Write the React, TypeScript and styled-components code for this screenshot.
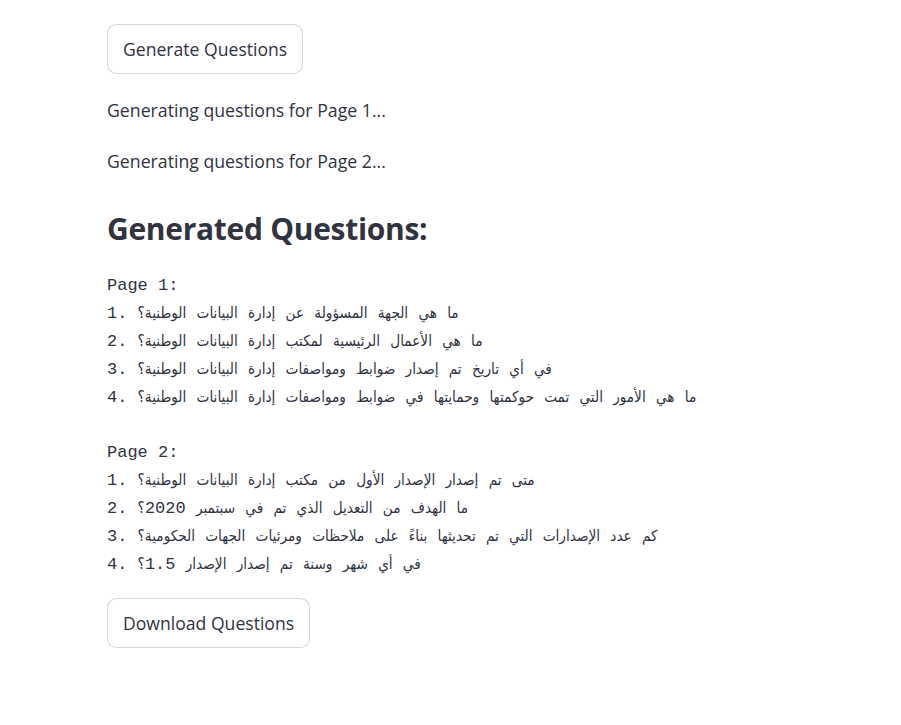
import React from "react";
import styled, { createGlobalStyle } from "styled-components";

const GlobalStyle = createGlobalStyle`
  html, body {
    margin: 0;
    padding: 0;
    background: #ffffff;
  }
  body {
    font-family: "Open Sans", "Liberation Sans", sans-serif;
    color: rgb(49, 51, 63);
  }
`;

const Main = styled.div`
  display: flex;
  flex-direction: column;
  align-items: flex-start;
  gap: 21px;
  padding: 24px 0 40px 107px;
`;

const Button = styled.button`
  height: 50px;
  padding: 0 15px;
  background: #ffffff;
  border: 1px solid rgba(49, 51, 63, 0.2);
  border-radius: 9.6px;
  font-family: "Open Sans", "Liberation Sans", sans-serif;
  font-size: 17.6px;
  color: rgb(49, 51, 63);
  cursor: pointer;
`;

const Status = styled.p`
  margin: 0;
  font-size: 17.7px;
  line-height: 30px;
`;

const Heading = styled.h2`
  margin: 13px 0 0;
  font-size: 30px;
  font-weight: 700;
  line-height: 38px;
  letter-spacing: -0.3px;
`;

const Output = styled.pre`
  margin: 3px 0 -2px;
  font-family: "Liberation Mono", "DejaVu Sans Condensed", "DejaVu Sans", monospace;
  font-size: 17px;
  line-height: 27.9px;
  color: rgb(49, 51, 63);
  white-space: pre;
`;

// arabic words come out of a proportional fallback, a bit smaller than the mono
const Ar = styled.span`
  font-size: 15.2px;
  line-height: 1;
`;

const pages: string[][] = [
  [
    "ما هي الجهة المسؤولة عن إدارة البيانات الوطنية؟",
    "ما هي الأعمال الرئيسية لمكتب إدارة البيانات الوطنية؟",
    "في أي تاريخ تم إصدار ضوابط ومواصفات إدارة البيانات الوطنية؟",
    "ما هي الأمور التي تمت حوكمتها وحمايتها في ضوابط ومواصفات إدارة البيانات الوطنية؟",
  ],
  [
    "متى تم إصدار الإصدار الأول من مكتب إدارة البيانات الوطنية؟",
    "ما الهدف من التعديل الذي تم في سبتمبر 2020؟",
    "كم عدد الإصدارات التي تم تحديثها بناءً على ملاحظات ومرئيات الجهات الحكومية؟",
    "في أي شهر وسنة تم إصدار الإصدار 1.5؟",
  ],
];

const renderLine = (text: string) =>
  text.split(/([\u0600-\u06FF]+)/).map((part, k) =>
    /[\u0600-\u06FF]/.test(part) ? <Ar key={k}>{part}</Ar> : part
  );

const App: React.FC = () => {
  return (
    <>
      <GlobalStyle />
      <Main>
        <Button>Generate Questions</Button>
        <Status>Generating questions for Page 1...</Status>
        <Status>Generating questions for Page 2...</Status>
        <Heading>Generated Questions:</Heading>
        <Output>
          {pages.map((qs, i) => (
            <React.Fragment key={i}>
              {i > 0 && "\n\n"}
              {`Page ${i + 1}:`}
              {qs.map((q, j) => (
                <React.Fragment key={j}>
                  {"\n"}
                  {`${j + 1}. `}
                  {renderLine(q)}
                </React.Fragment>
              ))}
            </React.Fragment>
          ))}
        </Output>
        <Button>Download Questions</Button>
      </Main>
    </>
  );
};

export default App;
